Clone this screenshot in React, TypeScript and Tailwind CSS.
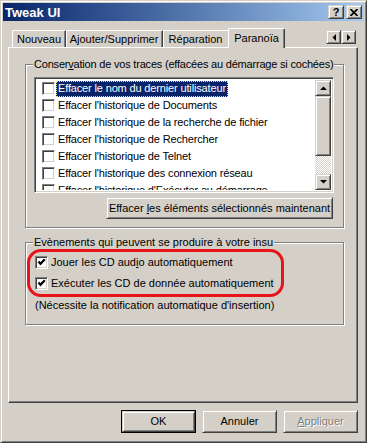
import React from "react";

const raised =
  "border border-t-[#d4d0c8] border-l-[#d4d0c8] border-r-[#404040] border-b-[#404040] shadow-[inset_1px_1px_0_#fff,inset_-1px_-1px_0_#808080]";
const sunken =
  "border border-t-[#808080] border-l-[#808080] border-r-white border-b-white shadow-[inset_1px_1px_0_#404040,inset_-1px_-1px_0_#d4d0c8]";

function Check({ checked }: { checked?: boolean }) {
  return (
    <div className={`w-[13px] h-[13px] bg-white shrink-0 flex items-center justify-center ${sunken}`}>
      {checked && (
        <svg width="9" height="9" viewBox="0 0 9 9">
          <path d="M1.5 3.5 L3.5 5.8 L7.8 1.2" stroke="#000" strokeWidth="2.2" fill="none" />
        </svg>
      )}
    </div>
  );
}

function Tri({ dir }: { dir: "up" | "down" | "left" | "right" }) {
  const pts: Record<string, string> = {
    up: "0,4 7,4 3.5,0.5",
    down: "0,0 7,0 3.5,3.5",
    left: "4,0 4,7 0.5,3.5",
    right: "0,0 0,7 3.5,3.5",
  };
  const vert = dir === "up" || dir === "down";
  return (
    <svg width={vert ? 7 : 4} height={vert ? 4 : 7} viewBox={vert ? "0 0 7 4" : "0 0 4 7"}>
      <polygon points={pts[dir]} fill="#000" />
    </svg>
  );
}

const items = [
  "Effacer le nom du dernier utilisateur",
  "Effacer l'historique de Documents",
  "Effacer l'historique de la recherche de fichier",
  "Effacer l'historique de Rechercher",
  "Effacer l'historique de Telnet",
  "Effacer l'historique des connexion réseau",
  "Effacer l'historique d'Exécuter au démarrage",
];

export default function App() {
  return (
    <div
      className={`w-[367px] h-[443px] bg-[#d4d0c8] p-[2px] flex flex-col text-[11px] text-black leading-none font-['Liberation_Sans',Arial,sans-serif] ${raised}`}
    >
      {/* Title bar */}
      <div className="h-[18px] shrink-0 flex items-center pl-[2px] pr-[2px] bg-gradient-to-r from-[#0a246a] to-[#a6caf0]">
        <span className="text-white font-bold text-[13px]">Tweak UI</span>
        <div className="ml-auto flex gap-[2px]">
          <div className={`w-[16px] h-[14px] bg-[#d4d0c8] flex items-center justify-center ${raised}`}>
            <span className="font-bold text-[11px] leading-none">?</span>
          </div>
          <div className={`w-[16px] h-[14px] bg-[#d4d0c8] flex items-center justify-center ${raised}`}>
            <svg width="8" height="7" viewBox="0 0 8 7">
              <path d="M0.5 0 L7.5 7 M7.5 0 L0.5 7" stroke="#000" strokeWidth="1.6" />
            </svg>
          </div>
        </div>
      </div>

      {/* Tabs row */}
      <div className="mt-[7px] ml-[5px] w-[350px] h-[19px] flex items-end pl-[4px] shrink-0">
        <div className="w-[54px] h-[17px] border-l border-t border-white border-r border-r-[#404040] shadow-[inset_-1px_0_0_#808080] rounded-tl-[2px] flex items-center justify-center pt-[1px]">
          Nouveau
        </div>
        <div className="w-[97px] h-[17px] border-t border-white border-r border-r-[#404040] shadow-[inset_-1px_0_0_#808080,inset_1px_0_0_#fff] flex items-center justify-center pt-[1px]">
          Ajouter/Supprimer
        </div>
        <div className="w-[65px] h-[17px] border-t border-white shadow-[inset_1px_0_0_#fff] flex items-center justify-center pt-[1px]">
          Réparation
        </div>
        <div className="relative z-10 -mb-px w-[57px] h-[20px] bg-[#d4d0c8] border-l border-t border-white border-r border-r-[#404040] shadow-[inset_-1px_0_0_#808080] rounded-tl-[2px] rounded-tr-[2px] flex items-start justify-center pt-[4px]">
          Paranoïa
        </div>
        <div className="ml-auto mr-[2px] self-start mt-[2px] flex">
          <div className={`w-[15px] h-[14px] flex items-center justify-center ${raised}`}>
            <Tri dir="left" />
          </div>
          <div className={`w-[15px] h-[14px] flex items-center justify-center ${raised}`}>
            <Tri dir="right" />
          </div>
        </div>
      </div>

      {/* Panel */}
      <div className="ml-[5px] w-[350px] h-[356px] shrink-0 border border-t-white border-l-white border-r-[#404040] border-b-[#404040] shadow-[inset_-1px_-1px_0_#808080] pt-[16px] pl-[16px] flex flex-col">
        {/* Group 1 */}
        <div className="relative w-[319px] h-[164px] border border-[#808080] shadow-[inset_1px_1px_0_#fff,1px_1px_0_#fff] pt-[12px] pl-[8px] flex flex-col">
          <span className="absolute left-[7px] top-[-7px] bg-[#d4d0c8] px-[1px] leading-[13px] whitespace-nowrap tracking-[-0.2px]">
            Conser<span className="underline">v</span>ation de vos traces (effacées au démarrage si cochées)
          </span>
          <div className={`w-[300px] h-[116px] bg-white p-[2px] flex ${sunken}`}>
            <div className="flex-1 overflow-hidden">
              {items.map((t, i) => (
                <div key={i} className="h-[17px] flex items-center pl-[5px]">
                  <Check />
                  <span
                    className={`ml-[1px] px-[2px] h-[16px] flex items-center whitespace-nowrap tracking-[-0.15px] ${
                      i === 0 ? "bg-[#0a246a] text-white outline-1 outline-dotted outline-[#e8e08a] -outline-offset-1" : ""
                    }`}
                  >
                    {t}
                  </span>
                </div>
              ))}
            </div>
            <div className="w-[16px] flex flex-col">
              <div className={`h-[16px] bg-[#d4d0c8] flex items-center justify-center ${raised}`}>
                <Tri dir="up" />
              </div>
              <div className={`h-[60px] bg-[#d4d0c8] ${raised}`} />
              <div className="flex-1 bg-[repeating-conic-gradient(#ffffff_0_25%,#d4d0c8_0_50%)] bg-[length:2px_2px]" />
              <div className={`h-[16px] bg-[#d4d0c8] flex items-center justify-center ${raised}`}>
                <Tri dir="down" />
              </div>
            </div>
          </div>
          <div className={`mt-[4px] self-end mr-[10px] w-[227px] h-[22px] flex items-center justify-center ${raised}`}>
            <span className="whitespace-nowrap">
              Effacer <span className="underline">l</span>es éléments sélectionnés maintenant
            </span>
          </div>
        </div>

        {/* Group 2 */}
        <div className="relative mt-[14px] w-[319px] h-[83px] border border-[#808080] shadow-[inset_1px_1px_0_#fff,1px_1px_0_#fff] pt-[11px] pl-[9px] flex flex-col">
          <span className="absolute left-[7px] top-[-7px] bg-[#d4d0c8] px-[1px] leading-[13px] whitespace-nowrap">
            Evènements qui peuvent se produire à votre insu
          </span>
          <div className="h-[17px] flex items-center">
            <Check checked />
            <span className="ml-[3px]">
              Jouer les CD aud<span className="underline">i</span>o automatiquement
            </span>
          </div>
          <div className="mt-[4px] h-[17px] flex items-center">
            <Check checked />
            <span className="ml-[3px]">Exécuter les CD de donnée automatiquement</span>
          </div>
          <div className="mt-[5px] h-[17px] flex items-center">(Nécessite la notification automatique d'insertion)</div>
          <div className="absolute left-[1px] top-[6px] w-[257px] h-[48px] border-[3px] border-[#e8141c] rounded-[14px]" />
        </div>
      </div>

      {/* Buttons */}
      <div className="mt-[7px] flex justify-end gap-[6px] pr-[6px]">
        <div className="w-[75px] h-[23px] border border-black">
          <div className={`w-full h-full flex items-center justify-center ${raised}`}>OK</div>
        </div>
        <div className={`w-[75px] h-[23px] flex items-center justify-center ${raised}`}>Annuler</div>
        <div className={`w-[75px] h-[23px] flex items-center justify-center text-[#808080] [text-shadow:1px_1px_0_#fff] ${raised}`}>
          <span>
            <span className="underline">A</span>ppliquer
          </span>
        </div>
      </div>
    </div>
  );
}
